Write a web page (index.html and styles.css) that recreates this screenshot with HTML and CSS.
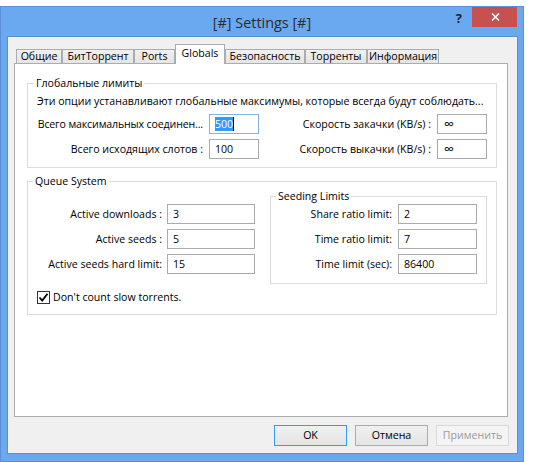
FILE: index.html
```html
<!DOCTYPE html>
<html lang="ru">
<head>
<meta charset="utf-8">
<title>Settings</title>
<link rel="stylesheet" href="styles.css">
</head>
<body>
<div class="window">
  <div class="titlebar">
    <div class="title">[#] Settings [#]</div>
    <div class="controls">
      <div class="help">?</div>
      <div class="close">
        <svg width="9" height="8" viewBox="0 0 9 8"><path d="M1 0.5 L8 7.5 M8 0.5 L1 7.5" stroke="#fff" stroke-width="1.6" fill="none"/></svg>
      </div>
    </div>
  </div>
  <div class="client">
    <div class="tabwidget">
      <div class="tabbar">
        <div class="tab tab-general">Общие</div>
        <div class="tab tab-bt">БитТоррент</div>
        <div class="tab tab-ports">Ports</div>
        <div class="tab tab-globals active">Globals</div>
        <div class="tab tab-security">Безопасность</div>
        <div class="tab tab-torrents">Торренты</div>
        <div class="tab tab-info">Информация</div>
      </div>
      <div class="pane">
        <fieldset class="group group-global">
          <legend>Глобальные лимиты</legend>
          <div class="desc">Эти опции устанавливают глобальные максимумы, которые всегда будут соблюдать...</div>
          <div class="limits-grid">
            <div class="label tight">Всего максимальных соединен...</div>
            <div class="field focused"><span class="sel">500</span><span class="caret"></span></div>
            <div class="label">Скорость закачки (KB/s) :</div>
            <div class="field inf">∞</div>
            <div class="label">Всего исходящих слотов :</div>
            <div class="field">100</div>
            <div class="label">Скорость выкачки (KB/s) :</div>
            <div class="field inf">∞</div>
          </div>
        </fieldset>
        <fieldset class="group group-queue">
          <legend>Queue System</legend>
          <div class="queue-body">
            <div class="queue-grid">
              <div class="label">Active downloads :</div>
              <div class="field">3</div>
              <div class="label">Active seeds :</div>
              <div class="field">5</div>
              <div class="label">Active seeds hard limit:</div>
              <div class="field">15</div>
            </div>
            <fieldset class="group group-seeding">
              <legend>Seeding Limits</legend>
              <div class="seeding-grid">
                <div class="label">Share ratio limit:</div>
                <div class="field">2</div>
                <div class="label">Time ratio limit:</div>
                <div class="field">7</div>
                <div class="label">Time limit (sec):</div>
                <div class="field">86400</div>
              </div>
            </fieldset>
          </div>
          <div class="check-row">
            <span class="checkbox">
              <svg width="11" height="11" viewBox="0 0 11 11"><path d="M1.5 5.5 L4.2 8.5 L9.5 1.8" stroke="#000" stroke-width="1.8" fill="none"/></svg>
            </span>
            <span>Don't count slow torrents.</span>
          </div>
        </fieldset>
      </div>
    </div>
    <div class="buttons">
      <div class="btn default">OK</div>
      <div class="btn">Отмена</div>
      <div class="btn disabled">Применить</div>
    </div>
  </div>
</div>
</body>
</html>
```

FILE: styles.css
```css
* { box-sizing: border-box; }
html, body { margin: 0; padding: 0; background: #fff; }
body {
  font-family: "Open Sans", "Noto Sans", sans-serif;
  font-size: 10.6px;
  line-height: 15px;
  color: #000;
}

.window {
  margin-top: 6px;
  width: 524px;
  height: 456px;
  background: #6aa9f0;
  border: 1px solid #5a8fd6;
  display: flex;
  flex-direction: column;
}

.titlebar {
  height: 29px;
  display: grid;
}
.titlebar > * { grid-area: 1 / 1; }
.title {
  justify-self: center;
  margin-top: 6px;
  font-size: 14.4px;
  line-height: 20px;
  color: #2b2b2b;
}
.controls {
  justify-self: end;
  display: flex;
  align-items: flex-start;
  margin-right: 6px;
}
.help {
  margin-top: 3px;
  margin-right: 10px;
  font-size: 13px;
  font-weight: bold;
  line-height: 16px;
  color: #222;
}
.close {
  width: 45px;
  height: 20px;
  background: #c75050;
  display: flex;
  align-items: center;
  justify-content: center;
  padding-left: 2px;
}

.client {
  flex: 1;
  margin: 0 5px 7px 6px;
  background: #f0f0f0;
  border: 1px solid #5b8fd0;
  padding: 7px 8px 0 6px;
  display: flex;
  flex-direction: column;
}

.tabwidget { width: 494px; }
.tabbar {
  display: flex;
  align-items: flex-end;
  height: 19px;
  padding-left: 2px;
}
.tab {
  height: 14px;
  border: 1px solid #acacac;
  border-bottom: none;
  background: linear-gradient(#f0f0f0, #e5e5e5);
  display: flex;
  justify-content: center;
  line-height: 12px;
  white-space: nowrap;
}
.tab.active {
  height: 20px;
  margin-bottom: -1px;
  background: #fff;
  position: relative;
  z-index: 1;
  line-height: 16px;
}
.tab-general { width: 46px; }
.tab-bt { width: 72px; }
.tab-ports { width: 41px; }
.tab-globals { width: 50px; }
.tab-security { width: 80px; }
.tab-torrents { width: 62px; }
.tab-info { width: 72px; }

.pane {
  height: 354px;
  border: 1px solid #acacac;
  background: #fff;
  padding: 12px 0 0 12px;
}

fieldset.group {
  margin: 0;
  min-width: 0;
  border: 1px solid #dcdcdc;
}
fieldset.group legend {
  padding: 0 2px;
  line-height: 15px;
}
.group-global {
  width: 470px;
  padding: 0 9px 8px 9px;
}
.group-global legend { margin-left: -3px; }
.group-queue {
  width: 470px;
  margin-top: 6px !important;
  padding: 0 9px 9px 9px;
}
.group-queue legend { margin-left: -4px; }
.group-seeding {
  width: 217px;
  padding: 0 9px 9px 9px;
}
.group-seeding legend { margin-left: -4px; }

.desc {
  padding-top: 3px;
  margin-bottom: 5px;
  white-space: nowrap;
}

.label {
  display: flex;
  justify-content: flex-end;
  white-space: nowrap;
  align-self: center;
}
.label.tight { letter-spacing: -0.14px; }
.field {
  height: 20px;
  border: 1px solid #ababab;
  background: #fff;
  padding: 0 5px;
  line-height: 18px;
  white-space: nowrap;
  display: flex;
  align-items: center;
}
.field.focused { border-color: #7eb4ea; }
.field .sel {
  background: #3399ff;
  color: #fff;
  line-height: 14px;
}
.field .caret {
  display: inline-block;
  width: 1px;
  height: 14px;
  background: #000;
}
.field.inf {
  padding-left: 6px;
  font-size: 14px;
}

.limits-grid {
  display: grid;
  grid-template-columns: 166px 50px 166px 50px;
  column-gap: 6px;
  row-gap: 5px;
}

.queue-body {
  display: flex;
  gap: 15px;
  align-items: flex-start;
}
.queue-grid {
  padding-top: 15px;
  display: grid;
  grid-template-columns: 125px 88px;
  column-gap: 5px;
  row-gap: 5px;
}
.seeding-grid {
  display: grid;
  grid-template-columns: 1fr 79px;
  column-gap: 6px;
  row-gap: 5px;
}

.check-row {
  margin-top: 6px;
  display: flex;
  align-items: center;
  gap: 3px;
  height: 15px;
}
.checkbox {
  width: 13px;
  height: 13px;
  border: 1px solid #333;
  background: #fff;
  display: flex;
  align-items: center;
  justify-content: center;
}

.buttons {
  margin-top: 8px;
  display: flex;
  justify-content: flex-end;
  gap: 8px;
  width: 495px;
}
.btn {
  width: 73px;
  height: 21px;
  border: 1px solid #acacac;
  background: linear-gradient(#f0f0f0, #e5e5e5);
  text-align: center;
  line-height: 19px;
}
.btn.default { border-color: #3399ff; }
.btn.disabled {
  border-color: #d9d9d9;
  background: #f4f4f4;
  color: #9a9a9a;
}
```
